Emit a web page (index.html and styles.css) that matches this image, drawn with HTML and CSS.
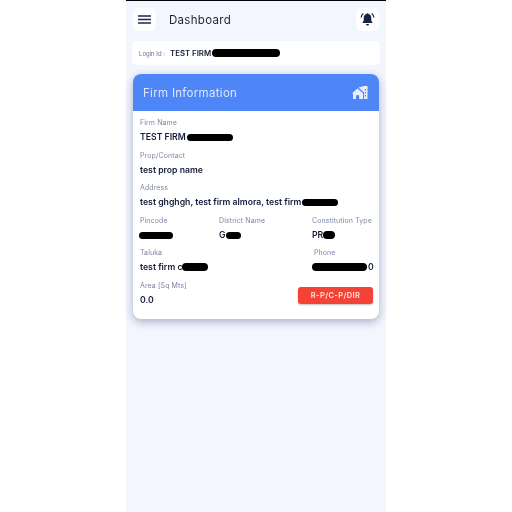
FILE: index.html
```html
<!DOCTYPE html>
<html lang="en">
<head>
    <meta charset="UTF-8">
    <title>Dashboard</title>
    <link rel="stylesheet" href="styles.css">
</head>
<body>
<div class="phone">
    <!-- Top bar -->
    <div class="topbar">
        <div class="icon-btn">
            <svg width="13" height="9" viewBox="0 0 13 9"><path d="M0 1h13M0 4.500h13M0 8h13" stroke="#1f2a44" stroke-width="1.400"/></svg>
        </div>
        <div class="page-title">Dashboard</div>
        <div class="icon-btn">
            <svg width="15" height="15" viewBox="0 0 15 15" fill="#17233f">
                <path d="M7.500 1.200c.6 0 1 .4 1 .9 2 .5 2.800 2.100 2.800 4v2.600l1.400 2.300H2.300l1.400-2.300V6.100c0-1.900.8-3.500 2.800-4 0-.5.4-.9 1-.9z"/>
                <path d="M6 12h3a1.500 1.500 0 0 1-3 0z"/>
                <path d="M3.300 1.500C2 2.500 1.300 3.800 1.100 5.500M11.700 1.500c1.300 1 2 2.300 2.200 4" fill="none" stroke="#17233f" stroke-width="1.200"/>
            </svg>
        </div>
    </div>

    <!-- Login strip -->
    <div class="login-bar">
        <span class="login-label">Login Id :</span>
        <span class="login-value">TEST FIRM</span>
        <span class="scribble scribble-login"></span>
    </div>

    <!-- Firm card -->
    <div class="card">
        <div class="card-head">
            <span class="card-title">Firm Information</span>
            <svg width="16" height="13" viewBox="0 0 16 13" fill="#e8eefc">
                <path d="M0 7.200 5.500 2.500 11 7.200V13H7.200V9.300H4V13H1V7.500z"/>
                <path d="M6.500 1.500 12 0h3.500v13H12V6.500z"/>
                <path d="M12.800 3h1.200v1.400h-1.200zM12.800 6h1.200v1.400h-1.200zM12.800 9h1.200v1.400h-1.200z" fill="#4f86f7"/>
            </svg>
        </div>
        <div class="card-body">
            <div class="field">
                <div class="label">Firm Name</div>
                <div class="value">TEST FIRM<span class="scribble scribble-firm"></span></div>
            </div>
            <div class="field">
                <div class="label">Prop/Contact</div>
                <div class="value">test prop name</div>
            </div>
            <div class="field">
                <div class="label">Address</div>
                <div class="value">test ghghgh, test firm almora, test firm<span class="scribble scribble-addr"></span></div>
            </div>
            <div class="grid">
                <div class="field">
                    <div class="label">Pincode</div>
                    <div class="value"><span class="scribble scribble-pin"></span></div>
                </div>
                <div class="field">
                    <div class="label">District Name</div>
                    <div class="value">G<span class="scribble scribble-dist"></span></div>
                </div>
                <div class="field">
                    <div class="label">Constitution Type</div>
                    <div class="value">PR<span class="scribble scribble-cons"></span></div>
                </div>
                <div class="field wide">
                    <div class="label">Taluka</div>
                    <div class="value">test firm c<span class="scribble scribble-taluka"></span></div>
                </div>
                <div class="field">
                    <div class="label phone-label">Phone</div>
                    <div class="value"><span class="scribble scribble-phone"></span>0</div>
                </div>
            </div>
            <div class="last-row">
                <div class="field">
                    <div class="label">Area [Sq Mts]</div>
                    <div class="value">0.0</div>
                </div>
                <div class="red-btn">R-P/C-P/DIR</div>
            </div>
        </div>
    </div>
</div>
</body>
</html>
```

FILE: styles.css
```css
body {
    margin: 0;
    background-color: #ffffff;
    font-family: "Inter", "Liberation Sans", sans-serif;
    color: #141c3a;
}
.phone {
    width: 260px;
    height: 511px;
    margin-left: 126px;
    background-color: #f3f6ff;
    border-top: 1px solid #000000;
    filter: blur(0.3px);
}
.topbar {
    display: flex;
    align-items: center;
    padding: 7px 7px 0 7px;
}
.icon-btn {
    width: 23px;
    height: 23px;
    border-radius: 6px;
    background-color: #ffffff;
    display: flex;
    align-items: center;
    justify-content: center;
}
.page-title {
    flex: 1;
    margin-left: 13px;
    font-size: 11.500px;
    letter-spacing: 0.3px;
    color: #1d2438;
}
.login-bar {
    display: flex;
    align-items: center;
    height: 24px;
    margin: 10px 6px 0 6px;
    padding-left: 7px;
    background-color: #ffffff;
    border-radius: 5px;
}
.login-label {
    font-size: 6px;
    color: #6b7590;
    margin-right: 5px;
}
.login-value {
    font-size: 7.800px;
    font-weight: 600;
}
.card {
    margin: 9px 7px 0 7px;
    background-color: #ffffff;
    border-radius: 8px;
    box-shadow: 0 3px 8px rgba(60, 70, 110, 0.4);
}
.card-head {
    display: flex;
    align-items: center;
    justify-content: space-between;
    height: 37px;
    padding: 0 11px 0 10px;
    background-color: #4f86f7;
    border-radius: 8px 8px 0 0;
}
.card-title {
    font-size: 11.500px;
    letter-spacing: 0.3px;
    color: #dce6fd;
}
.card-body {
    padding: 5px 6px 12px 7px;
}
.field {
    margin-bottom: 4.500px;
}
.label {
    font-size: 7px;
    line-height: 14px;
    letter-spacing: 0.1px;
    color: #7d86a5;
}
.value {
    font-size: 8.700px;
    font-weight: 600;
    line-height: 14px;
    white-space: nowrap;
}
.grid {
    display: grid;
    grid-template-columns: 79px 93px 1fr;
}
.wide {
    grid-column: span 2;
}
.phone-label {
    padding-left: 2px;
}
.last-row {
    display: flex;
    align-items: center;
    justify-content: space-between;
}
.last-row .field {
    margin-bottom: 0;
}
.red-btn {
    width: 75px;
    height: 17px;
    line-height: 17px;
    margin-top: 6px;
    text-align: center;
    font-size: 7.500px;
    font-weight: 600;
    letter-spacing: 0.4px;
    color: #ffe9e6;
    background-color: #f44336;
    border-radius: 3px;
    box-shadow: 0 1px 2px rgba(0, 0, 0, 0.25);
}
/* blacked out parts of the values */
.scribble {
    display: inline-block;
    height: 7px;
    background-color: #000000;
    border-radius: 4px;
    vertical-align: -1px;
}
.scribble-login { width: 68px; height: 8px; margin-left: 1px; vertical-align: middle; }
.scribble-firm { width: 46px; margin-left: 1px; }
.scribble-addr { width: 36px; margin-left: 1px; }
.scribble-pin { width: 34px; margin-left: -1px; }
.scribble-dist { width: 15px; }
.scribble-cons { width: 12px; height: 8px; }
.scribble-taluka { width: 26px; height: 8px; }
.scribble-phone { width: 55px; height: 8px; margin-right: 1px; }
```
